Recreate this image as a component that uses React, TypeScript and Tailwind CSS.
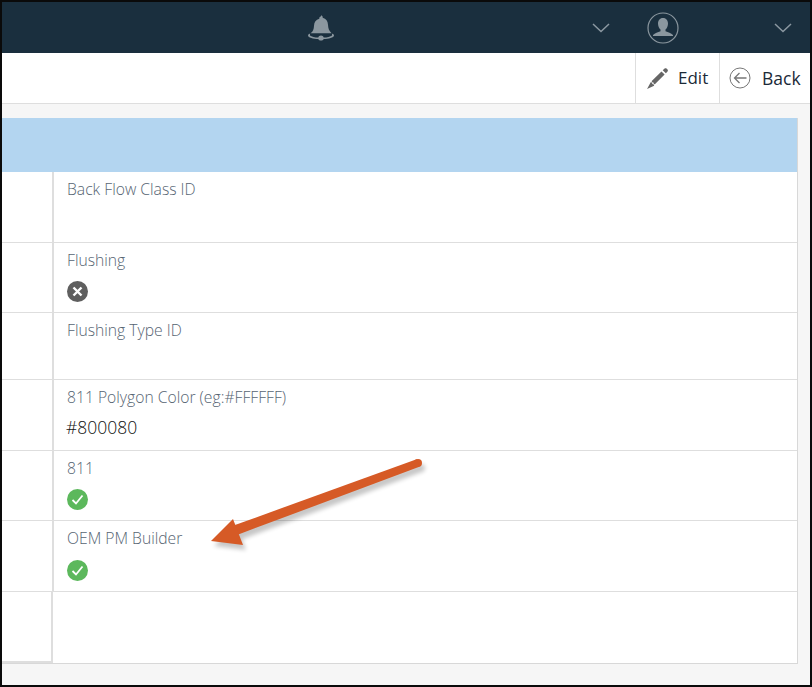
import React from 'react';

function Chevron() {
  return (
    <svg width="18" height="10" viewBox="0 0 18 10" fill="none" stroke="#8b98a1" strokeWidth="1.5">
      <path d="M1 1l8 7.5L17 1" />
    </svg>
  );
}

function Bell() {
  return (
    <svg width="28" height="28" viewBox="0 0 28 28" fill="#8b979f">
      <path d="M14 1.500c1 0 1.700.7 1.700 1.700v.6c3.500.8 5.100 3.600 5.300 7 .2 3.600.9 6 3.600 8.400H3.400C6.100 17.800 6.800 15.400 7 11.800c.2-3.400 1.800-6.200 5.300-7v-.6c0-1 .7-1.700 1.700-1.700z" />
      <path d="M1 21.500c0-.8 1-1.400 2-1.900v1.800c1.500 1.300 5 2 8.300 2.100.2-1.200 1.300-2 2.700-2s2.500.8 2.700 2c3.300-.1 6.800-.8 8.300-2.100v-1.800c1 .5 2 1.100 2 1.900 0 2-5.500 3.400-10.300 3.500-.4 1-1.500 1.600-2.700 1.600s-2.300-.6-2.700-1.600C6.500 24.900 1 23.500 1 21.500z" />
    </svg>
  );
}

function Avatar() {
  return (
    <svg width="32" height="32" viewBox="0 0 32 32">
      <circle cx="16" cy="16" r="15" fill="none" stroke="#8b979f" strokeWidth="1.2" />
      <path d="M16 6c3.300 0 5 2.500 5 5.500 0 2.500-1 4.800-2.500 6v1.800c2.700 1 5.500 1.800 7.500 3.700v1H6v-1c2-1.900 4.800-2.700 7.500-3.700v-1.800c-1.500-1.200-2.500-3.500-2.500-6C11 8.500 12.700 6 16 6z" fill="#8b979f" />
    </svg>
  );
}

function Pencil() {
  return (
    <svg width="23" height="23" viewBox="0 0 22 22" fill="#666">
      <path d="M5.500 13.500l9.300-9.300 3 3-9.300 9.300-1-.2-.4-1.400-1.400-.4z" />
      <path d="M4.500 14.500l1.200.4.4 1.400 1.400.4.300 1.200L1 21z" />
      <path d="M16 3l1.800-1.500c.5-.5 1.300-.5 1.800 0l1 1c.5.500.5 1.300 0 1.800L19 6z" />
    </svg>
  );
}

function BackIcon() {
  return (
    <svg width="22" height="22" viewBox="0 0 22 22" fill="none" stroke="#777" strokeWidth="1">
      <circle cx="11" cy="11" r="10" />
      <path d="M17.500 11H5.500M10.500 6l-5 5 5 5" strokeWidth="1.300" />
    </svg>
  );
}

function StatusIcon({ ok }: { ok: boolean }) {
  return (
    <svg width="21" height="21" viewBox="0 0 21 21">
      <circle cx="10.500" cy="10.500" r="10.500" fill={ok ? '#5cb85c' : '#5f5f5f'} />
      {ok ? (
        <path d="M5.500 11l3.500 3.500L15.500 6.500" fill="none" stroke="#fff" strokeWidth="1.800" />
      ) : (
        <path d="M6.500 6.500l8 8M14.500 6.500l-8 8" fill="none" stroke="#fff" strokeWidth="2.400" />
      )}
    </svg>
  );
}

function Row({ label, height, children }: { label: string; height: string; children?: React.ReactNode }) {
  return (
    <div className={`flex border-b border-[#dedede] ${height}`}>
      <div className="w-[52px] shrink-0 border-r-[2px] border-[#dedede]" />
      <div className="pl-[13px] pt-[7px]">
        <div className="text-[15.7px] font-light leading-[20px] text-[#566472]">{label}</div>
        {children}
      </div>
    </div>
  );
}

export default function App() {
  return (
    <div className="w-[812px] h-[687px] border-2 border-[#0a0a0a] bg-[#f6f6f6] font-['Open_Sans',sans-serif] relative overflow-hidden">
      {/* Top bar */}
      <div className="h-[51px] bg-[#1a2f3e] flex items-center">
        <div className="ml-[305px]"><Bell /></div>
        <div className="ml-[257px]"><Chevron /></div>
        <div className="ml-[37px]"><Avatar /></div>
        <div className="ml-[95px]"><Chevron /></div>
      </div>

      {/* Toolbar */}
      <div className="h-[51px] bg-white border-b border-[#dedede] flex justify-end">
        <div className="w-[84px] border-l border-[#dedede] flex items-center pl-[10px] gap-[9px]">
          <Pencil />
          <span className="text-[17px] text-[#1b2a38]">Edit</span>
        </div>
        <div className="w-[91px] border-l border-[#dedede] flex items-center pl-[9px] gap-[11px]">
          <BackIcon />
          <span className="text-[17.500px] text-[#1b2a38]">Back</span>
        </div>
      </div>

      {/* Card */}
      <div className="mt-[14px] w-[796px] border-r border-b border-[#d8d8d8] bg-white">
        <div className="h-[54px] bg-[#b3d5f0]" />
        <Row label="Back Flow Class ID" height="h-[71px]" />
        <Row label="Flushing" height="h-[70px]">
          <div className="mt-[11px]"><StatusIcon ok={false} /></div>
        </Row>
        <Row label="Flushing Type ID" height="h-[67px]" />
        <Row label="811 Polygon Color (eg:#FFFFFF)" height="h-[71px]">
          <div className="mt-[9px] -ml-px text-[17.500px] font-light leading-[22px] text-[#111]">#800080</div>
        </Row>
        <Row label="811" height="h-[70px]">
          <div className="mt-[11px]"><StatusIcon ok /></div>
        </Row>
        <Row label="OEM PM Builder" height="h-[71px]">
          <div className="mt-[12px]"><StatusIcon ok /></div>
        </Row>
        <div className="flex h-[71px]">
          <div className="w-[51px] shrink-0 border-r-[2px] border-b-[2px] border-[#dedede]" />
        </div>
      </div>

      {/* Annotation arrow */}
      <svg className="absolute left-[198px] top-[448px]" width="240" height="110" viewBox="0 0 240 110">
        <g fill="#000" opacity="0.22" transform="translate(3 5)" style={{ filter: 'blur(2px)' }}>
          <circle cx="218" cy="13" r="4" />
          <path d="M216.600 9.200L34.300 75.300 37.700 84.700 219.400 16.800z" />
          <path d="M11 91L33 69 43 95z" />
        </g>
        <circle cx="218" cy="13" r="4" fill="#d65a26" />
        <path d="M216.600 9.200L34.300 75.300 37.700 84.700 219.400 16.800z" fill="#d65a26" />
        <path d="M11 91L33 69 43 95z" fill="#d65a26" />
      </svg>
    </div>
  );
}
